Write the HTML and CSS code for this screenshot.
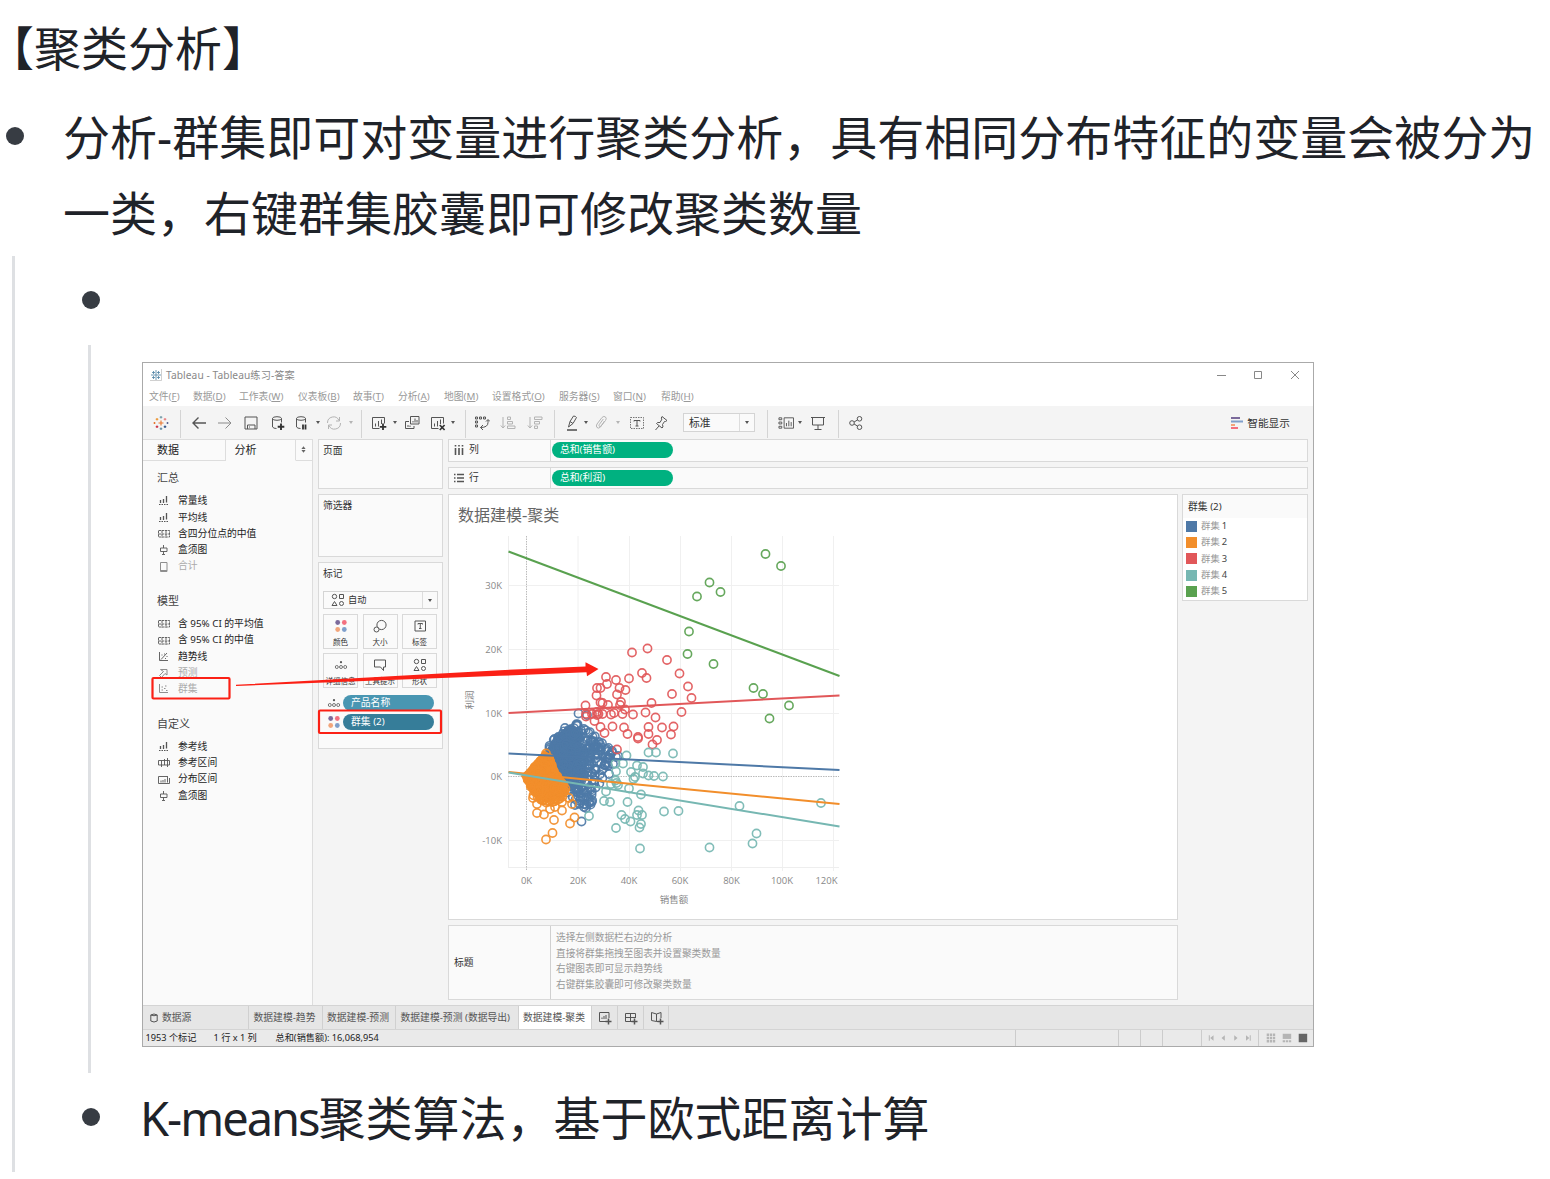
FILE: index.html
```html
<!DOCTYPE html>
<html lang="zh-CN">
<head>
<meta charset="utf-8">
<title>聚类分析</title>
<link rel="stylesheet" href="styles.css">
</head>
<body>
<svg class="defs" width="0" height="0">
  <symbol id="logo" viewBox="0 0 16 16"><g fill="none" stroke-width="1.100"><path stroke="#e8762d" d="M8 5.500v5M5.500 8h5"/><path stroke="#7199a6" d="M8 1v2.600M6.700 2.300h2.600"/><path stroke="#5b879b" d="M8 12.400v2.600M6.700 13.700h2.600"/><path stroke="#eb9129" d="M4 3v2.600M2.700 4.300h2.600"/><path stroke="#c72035" d="M4 10.400v2.600M2.700 11.700h2.600"/><path stroke="#e87a7a" d="M12 3v2.600M10.700 4.300h2.600"/><path stroke="#1f457e" d="M12 10.400v2.600M10.700 11.700h2.600"/><path stroke="#e8762d" d="M1.500 7v2M.5 8h2"/><path stroke="#5b6591" d="M14.500 7v2M13.500 8h2"/></g></symbol>
  <symbol id="app" viewBox="0 0 12 12"><path d="M6 1v10M1 6h10M3.500 2v3M2 3.500h3M8.500 2v3M7 3.500h3M3.500 7v3M2 8.500h3M8.500 7v3M7 8.500h3" stroke="#4f83a5" fill="none" stroke-width=".8"/><path d="M11.500 0v11.500H0" fill="none" stroke="#bbb" stroke-width=".7"/></symbol>
  <symbol id="back" viewBox="0 0 16 16"><path d="M15 8H2M7.500 2.500L2 8l5.500 5.500" stroke-width="1.400"/></symbol>
  <symbol id="fwd" viewBox="0 0 16 16"><path d="M1 8h13M8.500 2.500L14 8l-5.500 5.500"/></symbol>
  <symbol id="save" viewBox="0 0 16 16"><path d="M2 2h12v12H2zM4.500 14v-4h7.500v4M6 12h1"/></symbol>
  <symbol id="dsadd" viewBox="0 0 16 16"><ellipse cx="7" cy="3.500" rx="4.500" ry="1.800"/><path d="M2.500 3.500v8.500q1 1.500 4 1.500M11.500 3.500v4"/><path d="M11 8.500v6.500M7.700 11.700h6.600" stroke-width="1.900" stroke="#333"/></symbol>
  <symbol id="dspause" viewBox="0 0 16 16"><ellipse cx="7" cy="3.500" rx="4.500" ry="1.800"/><path d="M2.500 3.500v8.500q1 1.500 4 1.500M11.500 3.500v4"/><path d="M9 9.500v5M11.500 9.500v5" stroke-width="1.800" stroke="#333"/></symbol>
  <symbol id="refresh" viewBox="0 0 16 16"><path d="M1.500 8a6 6 0 0 1 11.500-2.500M14.500 8a6 6 0 0 1-11.500 2.500M13.500 2v4H10M2.500 14v-4H6"/></symbol>
  <symbol id="sheet" viewBox="0 0 16 16"><path d="M8.500 13.500H1.500v-11h12v6M4.500 8.500v3M7.500 6v5.500M10.500 4.500V9"/><path d="M12 8.500V15M8.800 11.800h6.500" stroke="#333" stroke-width="1.800"/></symbol>
  <symbol id="dup" viewBox="0 0 16 16"><path d="M6.500 1.500h8.500v7.500H6.500zM9 7.500V6M11 7.500V3.500M13 7.500V5M5 6.500H1.500v7h8.500V11M4 12v-2M6 12v-1.500"/></symbol>
  <symbol id="clear" viewBox="0 0 16 16"><path d="M8.500 13.500H1.500v-11h12v6M4.500 8.500v3M7.500 6v5.500M10.500 4.500V9"/><path d="M9.800 10l4.800 5M14.600 10l-4.800 5" stroke="#333" stroke-width="1.700"/></symbol>
  <symbol id="swap" viewBox="0 0 16 16"><path d="M1.500 2h2v2h-2zM5.500 2h2v2h-2zM9.500 2h2v2h-2zM1.500 6h2v2h-2zM1.500 10h2v2h-2zM14 5v2.500q0 5-7.500 5M12 6.500L14 4.500l2 2M9 10l-2.500 2.500L9 15"/></symbol>
  <symbol id="asc" viewBox="0 0 16 16"><path d="M3 2v11M.8 10.500L3 13l2.200-2.500M7.500 2h3v2.500h-3zM7.500 6.500h5V9h-5zM7.500 11H15v2.500H7.500z"/></symbol>
  <symbol id="desc" viewBox="0 0 16 16"><path d="M3 2v11M.8 10.500L3 13l2.200-2.500M7.500 2H15v2.500H7.500zM7.500 6.500h5V9h-5zM7.500 11h3v2.500h-3z"/></symbol>
  <symbol id="pen" viewBox="0 0 16 16"><path d="M4.500 12L6 6.500l3.500-5.500q2 0 3 1.500L9 8.500zM6 6.500l3 2"/><path d="M3 15h10" stroke-width="1.600"/></symbol>
  <symbol id="clip" viewBox="0 0 16 16"><path d="M11.500 6l-4 6q-2 2-3.500.5-1.300-1.300 0-3.500L9 2.500q2-2 3.500-.500t0 3.500L8 11q-1 1-1.700.3-.6-.8 0-1.800l4-5.500"/></symbol>
  <symbol id="label" viewBox="0 0 16 16"><path d="M1.500 2.500h13v11h-13z" stroke-dasharray="1.500 1" stroke-width=".8"/><path d="M5 6.500V5.500h6v1M8 5.500V11M6.500 11h3"/></symbol>
  <symbol id="pin" viewBox="0 0 16 16"><path d="M9 1.500l5 4-1.500 1-1 0L9.500 9.500l.5 2.500-1 1L3.500 8.500l1-1H7l2-3.500-.8-.8zM6 11l-3.500 4"/></symbol>
  <symbol id="cards" viewBox="0 0 17 16"><path d="M1 2.500h3v2H1zM1 7h3v2H1zM1 11.500h3v2H1zM6.500 2.500h10v11h-10zM9 11.500V8M11.500 11.500v-6M14 11.500V7"/></symbol>
  <symbol id="present" viewBox="0 0 16 16"><path d="M1 2.500h14M2.500 2.500v7.500h11V2.500M8 10v4M4.500 14.500h7"/></symbol>
  <symbol id="share" viewBox="0 0 16 16"><circle cx="4" cy="8" r="2.300"/><circle cx="11.500" cy="3.800" r="2.300"/><circle cx="11.500" cy="12.200" r="2.300"/><path d="M6.100 7l3.300-2M6.100 9l3.300 2"/></symbol>
  <symbol id="line" viewBox="0 0 12 10"><path d="M2.500 4v3M5.500 3v4M8.500 0v6.500" stroke-width="1.300"/><path d="M1 8.500h10" stroke-dasharray="1.500 1"/></symbol>
  <symbol id="range" viewBox="0 0 12 10"><path d="M.5 1.500h11v6.500H.500zM.5 5h11M4 1.500v7M8 1.500v7" stroke-dasharray="2.500 .7" stroke-width=".9"/></symbol>
  <symbol id="span" viewBox="0 0 12 10"><path d="M.5 2.500h11v4.500H.500zM3.500 2.500v6.500M6.500 1v6M9.500 0v9" stroke-width=".9"/></symbol>
  <symbol id="dist" viewBox="0 0 12 10"><path d="M9 1.500H.500v7h11V3M3 5.500v2M5 5v2.500M7 4v3.500M9.500 1v6.500" stroke-width=".9"/></symbol>
  <symbol id="box" viewBox="0 0 12 10"><path d="M5.500 0v3M2.500 3h6.500v3.500H2.500zM5.500 6.500V9M4 9.500h3" stroke-width=".9"/></symbol>
  <symbol id="total" viewBox="0 0 12 10"><path d="M2.500 .5h6.500v9H2.500zM2.500 8.500h6.500"/></symbol>
  <symbol id="trend" viewBox="0 0 12 10"><path d="M1.500 0v8.500H10M3 7.500l6-6.500M3.500 3h1M6 2h1M7 6.500h1M8.500 4.500h1" stroke-width=".9"/></symbol>
  <symbol id="fore" viewBox="0 0 12 10"><path d="M2.500 1.500h6.500V7L7 5.500 3.500 9.500 1.500 7.500 5.500 3.500z"/></symbol>
  <symbol id="clust" viewBox="0 0 12 10"><path d="M1.500 0v8.500H10M3.500 3h1.500M3.500 6h1.500M7 2h1.500M6 4.500h1.500M8 6.500H9.500"/></symbol>
  <symbol id="shapes" viewBox="0 0 14 14"><circle cx="3.500" cy="3.500" r="2.200"/><path d="M8.500 1.500h4v4h-4zM3.500 8.500l2.500 4h-5z"/><circle cx="10.500" cy="10.500" r="2"/></symbol>
  <symbol id="colors" viewBox="0 0 14 14"><g stroke="none"><circle cx="3.700" cy="3.500" r="2.400" fill="#7b6a9b"/><circle cx="10.300" cy="3.500" r="2.400" fill="#f3707f"/><circle cx="3.700" cy="10.500" r="2.400" fill="#f2a57b"/><circle cx="10.300" cy="10.500" r="2.400" fill="#7f9fcb"/></g></symbol>
  <symbol id="size" viewBox="0 0 14 14"><circle cx="8.500" cy="6" r="4.600"/><circle cx="3.500" cy="10.500" r="2.500" fill="#fafafa"/></symbol>
  <symbol id="tag" viewBox="0 0 14 14"><path d="M2 2h10.500v10H2zM5 5.500V4.500h4.500v1M7.250 4.500v5M6 9.500h2.500"/></symbol>
  <symbol id="detail" viewBox="0 0 14 14"><circle cx="7" cy="4.200" r="1.100" fill="#555" stroke="none"/><circle cx="2.800" cy="9" r="1.500" stroke-width=".8"/><circle cx="7" cy="9" r="1.500" stroke-width=".8"/><circle cx="11.200" cy="9" r="1.500" stroke-width=".8"/></symbol>
  <symbol id="tip" viewBox="0 0 14 14"><path d="M1.500 2h11v7h-2v3.500L7.500 9h-6z"/></symbol>
  <symbol id="tabsheet" viewBox="0 0 14 14"><path d="M8 10.500H1.500v-9h9.500V7M4 8V6.500M6 8V5M8 8V4"/><path d="M10.500 7.500v6M7.500 10.500h6" stroke-width="1.500"/></symbol>
  <symbol id="tabdash" viewBox="0 0 14 14"><path d="M8 10.500H1.500v-8h10V7M1.500 6.500h10M6.500 2.500v8"/><path d="M10.500 7.500v6M7.500 10.500h6" stroke-width="1.500"/></symbol>
  <symbol id="tabstory" viewBox="0 0 14 14"><path d="M8 10.500H6.500L1.500 9.500v-8L6.500 3v7.500M6.500 3l4.500-1.500V7"/><path d="M10.500 7.500v6M7.500 10.500h6" stroke-width="1.500"/></symbol>
</svg>

<h1 class="title">【聚类分析】</h1>
<ul class="notes">
  <li class="note">分析-群集即可对变量进行聚类分析，具有相同分布特征的变量会被分为一类，右键群集胶囊即可修改聚类数量</li>
</ul>
<div class="branch">
  <div class="note empty"></div>
  <div class="branch inner">
    <section class="window">
      <header class="titlebar"><svg class="app"><use href="#app"/></svg><span>Tableau - Tableau练习-答案</span>
        <svg class="winctl" viewBox="0 0 88 12"><path d="M1 6.500h9M38.500 2.500h7v7h-7zM75 2l8 8M83 2l-8 8"/></svg></header>
      <nav class="menu"><span>文件(<u>F</u>)</span><span>数据(<u>D</u>)</span><span>工作表(<u>W</u>)</span><span>仪表板(<u>B</u>)</span><span>故事(<u>T</u>)</span><span>分析(<u>A</u>)</span><span>地图(<u>M</u>)</span><span>设置格式(<u>O</u>)</span><span>服务器(<u>S</u>)</span><span>窗口(<u>N</u>)</span><span>帮助(<u>H</u>)</span></nav>
      <div class="toolbar">
        <i><svg><use href="#logo"/></svg></i><i class="sep"></i><i><svg><use href="#back"/></svg></i><i class="mid"><svg><use href="#fwd"/></svg></i><i><svg><use href="#save"/></svg></i><i><svg><use href="#dsadd"/></svg></i><i><svg><use href="#dspause"/></svg></i><i class="caret"></i><i class="off"><svg><use href="#refresh"/></svg></i><i class="caret off"></i><i class="sep"></i><i><svg><use href="#sheet"/></svg></i><i class="caret"></i><i><svg><use href="#dup"/></svg></i><i><svg><use href="#clear"/></svg></i><i class="caret"></i><i class="sep"></i><i><svg><use href="#swap"/></svg></i><i class="off"><svg><use href="#asc"/></svg></i><i class="off"><svg><use href="#desc"/></svg></i><i class="sep"></i><i><svg><use href="#pen"/></svg></i><i class="caret"></i><i class="off"><svg><use href="#clip"/></svg></i><i class="caret off"></i><i><svg><use href="#label"/></svg></i><i class="pin"><svg><use href="#pin"/></svg></i><div class="fit"><span>标准</span><i class="caret"></i></div><i class="sep"></i><i><svg><use href="#cards"/></svg></i><i class="caret"></i><i><svg><use href="#present"/></svg></i><i class="sep"></i><i><svg><use href="#share"/></svg></i>
        <div class="smart"><svg viewBox="0 0 12 12"><path d="M0 1h9" stroke="#7b6a9b"/><path d="M0 4.500h12" stroke="#7f9fcb"/><path d="M0 8h4" stroke="#f2a57b"/><path d="M0 11h7" stroke="#f3707f"/></svg>智能显示</div>
      </div>
      <div class="work">
        <aside class="side">
          <div class="sidetabs"><b>数据</b><b class="on">分析</b><b class="sort"><svg viewBox="0 0 6 8"><path d="M3 0l2.500 3.300H.5zM3 8l2.500-3.300H.5z"/></svg></b></div>
          <h2>汇总</h2>
          <ul><li><svg><use href="#line"/></svg>常量线</li><li><svg><use href="#line"/></svg>平均线</li><li><svg><use href="#range"/></svg>含四分位点的中值</li><li><svg><use href="#box"/></svg>盒须图</li><li class="off"><svg><use href="#total"/></svg>合计</li></ul>
          <h2>模型</h2>
          <ul><li><svg><use href="#range"/></svg>含 95% CI 的平均值</li><li><svg><use href="#range"/></svg>含 95% CI 的中值</li><li><svg><use href="#trend"/></svg>趋势线</li><li class="off"><svg><use href="#fore"/></svg>预测</li><li class="off"><svg><use href="#clust"/></svg>群集</li></ul>
          <h2>自定义</h2>
          <ul><li><svg><use href="#line"/></svg>参考线</li><li><svg><use href="#span"/></svg>参考区间</li><li><svg><use href="#dist"/></svg>分布区间</li><li><svg><use href="#box"/></svg>盒须图</li></ul>
        </aside>
        <div class="shelfcol">
          <div class="card pages">页面</div>
          <div class="card filters">筛选器</div>
          <div class="card marks">
            <div class="cardname">标记</div>
            <div class="marktype"><svg><use href="#shapes"/></svg><span>自动</span><i class="caret"></i></div>
            <div class="markgrid">
              <div><svg><use href="#colors"/></svg>颜色</div><div><svg><use href="#size"/></svg>大小</div><div><svg><use href="#tag"/></svg>标签</div>
              <div><svg><use href="#detail"/></svg>详细信息</div><div><svg><use href="#tip"/></svg>工具提示</div><div><svg><use href="#shapes"/></svg>形状</div>
            </div>
            <div class="markrow"><svg><use href="#detail"/></svg><span class="pill">产品名称</span></div>
            <div class="markrow"><svg><use href="#colors"/></svg><span class="pill dark">群集 (2)</span></div>
          </div>
        </div>
        <div class="main">
          <div class="card shelf"><div class="shelfname"><svg viewBox="0 0 10 10"><path d="M1.500 0v1.500M1.500 3v7M5 0v1.500M5 3v7M8.500 0v1.500M8.500 3v7"/></svg>列</div><span class="pill green">总和(销售额)</span></div>
          <div class="card shelf"><div class="shelfname"><svg viewBox="0 0 10 10"><path d="M0 1.500h1.500M3 1.500h7M0 5h1.500M3 5h7M0 8.500h1.500M3 8.500h7"/></svg>行</div><span class="pill green">总和(利润)</span></div>
          <div class="lower">
            <div class="canvas">
              <div class="card view"><h3>数据建模-聚类</h3><svg id="chart" class="chart" viewBox="449 532 729 386"></svg></div>
              <div class="card caption"><div class="capname">标题</div><p>选择左侧数据栏右边的分析<br>直接将群集拖拽至图表并设置聚类数量<br>右键图表即可显示趋势线<br>右键群集胶囊即可修改聚类数量</p></div>
            </div>
            <div class="card legend"><h4>群集 (2)</h4><ul><li class="c1">群集 <b>1</b></li><li class="c2">群集 <b>2</b></li><li class="c3">群集 <b>3</b></li><li class="c4">群集 <b>4</b></li><li class="c5">群集 <b>5</b></li></ul></div>
          </div>
        </div>
      </div>
      <div class="tabs"><span class="src"><svg viewBox="0 0 8 10"><path d="M.8 2q3.200-2 6.400 0v6q-3.200 2-6.400 0zM.8 2q3.200 1.500 6.400 0"/></svg>数据源</span><span>数据建模-趋势</span><span>数据建模-预测</span><span class="wide">数据建模-预测 (数据导出)</span><span class="on">数据建模-聚类</span><span class="add"><svg><use href="#tabsheet"/></svg></span><span class="add"><svg><use href="#tabdash"/></svg></span><span class="add"><svg><use href="#tabstory"/></svg></span></div>
      <footer class="status"><span class="s1">1953 个标记</span><span class="s2">1 行 x 1 列</span><span class="s3">总和(销售额): 16,068,954</span>
        <div class="cells"><i></i><i></i><i></i><i></i><i><svg viewBox="0 0 57 17"><path fill="#b5b5b5" d="M6 5.500h1v6H6zM7.500 8.500l3.500-3v6zM19.500 8.500l3.500-3v6zM36.500 8.500l-3.500-3v6zM49 8.500l-3.500-3v6zM49.500 5.500h1v6h-1z"/></svg></i><i><svg viewBox="0 0 55 17"><path d="M7 5h9M7 8.500h9M7 12h9" stroke="#b5b5b5" stroke-width="2.500" stroke-dasharray="2.500 .8"/><path fill="#b5b5b5" d="M24 4h9v5.500h-9z"/><path d="M24 12h9" stroke="#b5b5b5" stroke-width="2" stroke-dasharray="2.500 .8"/><path fill="#666" d="M41 4h9v9h-9z"/></svg></i></div></footer>
      <svg class="marker" viewBox="142 362 1172 685"><g fill="none" stroke="#fb2015" stroke-width="2.200"><rect x="152.500" y="678" width="77" height="20.500" rx="1"/><rect x="319" y="710.500" width="122" height="22.500" rx="1"/></g><path fill="#fb2015" d="M236 684.800L500 670.200 585.500 666.400V662.300L598.500 669 587 676.300 586.500 672.200 500 675.800 236 686z"/></svg>
    </section>
  </div>
  <div class="note last"><span class="latin">K-means</span>聚类算法，基于欧式距离计算</div>
</div>
<script src="chart.js"></script>
</body>
</html>
```

FILE: styles.css
```css
* { box-sizing: border-box; }
body { margin: 0; width: 1550px; height: 1179px; overflow: hidden; background: #fff; color: #1f2329; font-family: "Noto Sans", "Noto Sans CJK SC", sans-serif; }
ul { list-style: none; margin: 0; padding: 0; }
i, b, u { font-style: normal; font-weight: 400; }
svg { fill: none; stroke: #555; display: block; flex: none; }
.defs { position: absolute; }

.title { margin: 0; text-indent: -13px; padding-top: 8px; font-size: 47px; line-height: 76px; font-weight: 400; font-family: "Noto Sans CJK SC", sans-serif; height: 99px; }
.note { position: relative; font-size: 47px; line-height: 76px; padding-left: 63px; white-space: normal; }
.notes { height: 157px; }
.note::before { content: ""; position: absolute; left: 6px; top: 28px; width: 18px; height: 18px; border-radius: 50%; background: #373c43; }
.branch { margin-left: 12px; border-left: 3px solid #dee0e3; height: 916px; padding-top: 6px; }
.branch .note { margin-left: 61px; padding-left: 64px; }
.branch .note::before { left: 6px; top: 29px; }
.empty { height: 83px; }
.inner { margin-left: 73px; height: 728px; padding: 17px 0 0 51px; }
.last { padding-top: 7px; }
.branch .last::before { top: 35px; }
.latin { letter-spacing: -2px; }

.window { position: relative; width: 1172px; height: 685px; border: 1px solid #aaa; background: #f4f4f4; display: flex; flex-direction: column; font-size: 9.8px; line-height: 16px; color: #333; }
.titlebar { height: 23px; background: #fff; display: flex; align-items: center; padding-left: 7px; color: #888; font-size: 10.2px; gap: 4px; }
.titlebar span { letter-spacing: .08px; }
.app { width: 12px; height: 12px; }
.winctl { width: 88px; height: 12px; margin-left: auto; margin-right: 9px; stroke: #888; }
.menu { height: 20px; background: #fff; color: #999; display: grid; grid-template-columns: 44px 46px 59px 55px 45px 46px 48px 67px 54px 48px 50px; padding-left: 6px; line-height: 22px; white-space: nowrap; }
.toolbar { height: 33px; display: grid; padding-left: 1px; grid-template-columns: 34px 5px 31px 22px 30px 24px 24px 8px 24px 10px 10px 26px 6px 28px 24px 6px 18px 16px 36px 18px 20px 16px 12px 18px 16px 22px 33px 76px 21px 16px 12px 24px 17px 18px 1fr; }
.toolbar > i { display: flex; align-items: center; justify-content: center; }
.toolbar > i svg { width: 16px; height: 16px; }
.toolbar .off { opacity: .4; }
.toolbar .mid { opacity: .65; }
.toolbar .pin { justify-content: flex-start; padding-left: 5px; }
.sep::before { content: ""; width: 1px; height: 28px; background: #d4d4d4; margin-top: 3px; }
.caret::before { content: ""; border: 2.500px solid transparent; border-top: 3px solid #555; border-bottom: 0; }
.fit { align-self: center; margin: 0 2px; height: 19px; border: 1px solid #d4d4d4; background: #fafafa; display: flex; line-height: 17px; font-size: 10.8px; padding-left: 5px; }
.fit .caret, .marktype .caret { margin-left: auto; width: 15px; border-left: 1px solid #ddd; display: flex; align-items: center; justify-content: center; }
.smart { display: flex; align-items: center; justify-content: flex-end; gap: 4px; padding-right: 23px; font-size: 10.7px; }
.smart svg { width: 12px; height: 12px; stroke-width: 2; }

.work { height: 566px; display: flex; }
.side { width: 170px; background: #fafafa; border-right: 1px solid #ddd; color: #222; }
.sidetabs { display: flex; height: 22px; margin-bottom: 1px; }
.sidetabs b { width: 83px; border-right: 1px solid #ddd; border-bottom: 1px solid #ddd; padding-left: 14px; line-height: 20px; font-size: 11px; border-top: 1px solid #ddd; }
.sidetabs b.on { width: 71px; padding-left: 9px; border-bottom-color: transparent; }
.sidetabs b.sort { width: 16px; border-right: 0; padding: 6px 5px; }
.sort svg { width: 5px; height: 7px; fill: #666; stroke: none; }
.side h2 { margin: 0; padding-left: 14px; font-size: 11px; font-weight: 400; line-height: 31.300px; color: #444; }
.side ul { margin-bottom: 10px; }
.side li { height: 16.300px; line-height: 16.300px; display: flex; align-items: center; gap: 8px; padding-left: 15px; white-space: nowrap; }
.side li svg { width: 12px; height: 10px; }
.side .off { color: #aaa; }
.side .off svg { opacity: .65; }

.card { background: #fafafa; border: 1px solid #d9d9d9; }
.shelfcol { width: 125px; margin: 0 5px; display: flex; flex-direction: column; gap: 5px; }
.pages, .filters { padding: 3px 4px; height: 50px; }
.filters { height: 63px; }
.marks { height: 187px; padding: 3px 4px; }
.cardname { height: 25px; }
.marktype { display: flex; height: 18px; border: 1px solid #d4d4d4; align-items: stretch; padding-left: 7px; gap: 3px; line-height: 16px; font-size: 9.200px; }
.marktype svg { width: 14px; height: 14px; margin-top: 1px; }
.markgrid { margin-top: 5px; display: grid; grid-template-columns: repeat(3, 35px); gap: 4px 4.500px; }
.markgrid div { height: 35px; border: 1px solid #d9d9d9; display: flex; flex-direction: column; align-items: center; font-size: 7.500px; line-height: 10px; padding-top: 4px; white-space: nowrap; gap: 4px; }
.markgrid svg, .markrow svg { width: 14px; height: 14px; }
.markrow { display: flex; align-items: center; gap: 2px; padding-left: 4px; height: 16px; margin-top: 7px; }
.markrow + .markrow { margin-top: 3px; }
.pill { width: 91px; height: 16px; border-radius: 8px; background: #4996b2; color: #fff; padding-left: 8px; line-height: 16px; font-size: 9.800px; }
.dark { background: #367d99; }
.green { width: 121px; background: #00b180; margin: 2px 0 0 1px; }

.main { width: 860px; display: flex; flex-direction: column; gap: 5px; }
.shelf { height: 22.500px; display: flex; }
.shelfname { width: 102px; border-right: 1px solid #d9d9d9; display: flex; align-items: center; gap: 5px; padding-left: 5px; }
.shelfname svg { width: 10px; height: 10px; stroke-width: 1.600; }
.lower { display: flex; justify-content: space-between; }
.canvas { width: 730px; display: flex; flex-direction: column; gap: 5px; }
.view { height: 426px; background: #fff; }
.view h3 { margin: 0; height: 37px; padding-left: 9px; line-height: 41px; font-weight: 400; font-size: 16px; color: #666; font-family: "Liberation Serif", "Noto Sans CJK SC", serif; }
.chart { width: 729px; height: 386px; }
.chart text { stroke: none; fill: #888; font-size: 9.500px; font-family: "Open Sans", "Noto Sans CJK SC", sans-serif; }
.caption { height: 75px; display: flex; }
.capname { width: 102px; border-right: 1px solid #d0d0d0; padding-left: 5px; line-height: 73px; }
.caption p { margin: 4px 5px; font-size: 9.700px; line-height: 15.500px; color: #999; }
.legend { width: 126px; height: 107px; background: #fff; }
.legend h4 { margin: 0; height: 23px; padding-left: 5px; line-height: 23px; font-weight: 400; font-size: 9.800px; background: #fafafa; }
.legend li { height: 16.300px; line-height: 16.300px; display: flex; gap: 2px; align-items: center; color: #999; padding-left: 3px; font-size: 9.400px; }
.legend li b { color: #444; }
.legend li::before { content: ""; width: 11px; height: 11px; margin-right: 2px; background: #4e79a7; }
.legend .c2::before { background: #f28e2b; }
.legend .c3::before { background: #e15759; }
.legend .c4::before { background: #76b7b2; }
.legend .c5::before { background: #59a14f; }

.tabs { height: 24px; background: #e6e6e6; border-top: 1px solid #d4d4d4; display: flex; line-height: 24px; color: #555; white-space: nowrap; }
.tabs span { width: 73.500px; padding-left: 4.500px; border-right: 1px solid #d0d0d0; }
.tabs .src { width: 106px; display: flex; align-items: center; gap: 4px; padding-left: 7px; }
.src svg { width: 8px; height: 10px; }
.tabs .wide { width: 122.500px; }
.tabs .on { background: #fff; }
.tabs .add { width: 25.800px; display: flex; align-items: center; padding-left: 6px; }
.add svg { width: 14px; height: 14px; }
.status { height: 17px; background: #eaeaea; border-top: 1px solid #d4d4d4; display: flex; font-size: 9.200px; line-height: 16px; padding-left: 2.500px; color: #222; white-space: nowrap; }
.s1 { width: 68px; } .s2 { width: 62px; }
.cells { margin-left: auto; display: grid; grid-template-columns: 103px 22px 22px 39px 57px 55px; }
.cells i { border-left: 1px solid #ccc; }
.cells svg { stroke: none; height: 16px; width: 100%; }
.marker { position: absolute; left: -1px; top: -1px; width: 1172px; height: 685px; stroke: none; }
```

FILE: chart.js
```js
const chart = document.getElementById('chart');
const NS = 'http://www.w3.org/2000/svg';
const BLUE = '#4e79a7', ORANGE = '#f28e2b', RED = '#e15759', TEAL = '#76b7b2', GREEN = '#59a14f';

function add(tag, attrs, text) {
  const el = document.createElementNS(NS, tag);
  for (const k in attrs) el.setAttribute(k, attrs[k]);
  if (text) el.textContent = text;
  chart.appendChild(el);
}
function line(x1, y1, x2, y2, stroke, width, dash) {
  add('line', { x1, y1, x2, y2, stroke, 'stroke-width': width, 'stroke-dasharray': dash || 'none' });
}
function dots(color, list) {
  for (let i = 0; i < list.length; i += 2)
    add('circle', { cx: list[i], cy: list[i + 1], r: 4.1, stroke: color, 'stroke-width': 1.6, 'stroke-opacity': .92 });
}

// repeatable pseudo-random numbers for the crowded clusters
let seed = 11;
function rnd() { seed = (seed * 16807) % 2147483647; return seed / 2147483647; }
function inside(x, y, p) {
  let hit = false;
  for (let i = 0, j = p.length - 2; i < p.length; j = i, i += 2)
    if ((p[i + 1] > y) !== (p[j + 1] > y) && x < (p[j] - p[i]) * (y - p[i + 1]) / (p[j + 1] - p[i + 1]) + p[i]) hit = !hit;
  return hit;
}
function crowd(color, poly, count) {
  const list = [];
  while (list.length < count * 2) {
    const x = 515 + rnd() * 110, y = 710 + rnd() * 110;
    if (inside(x, y, poly)) list.push(x, y);
  }
  dots(color, list);
}

[578, 629.5, 680.5, 731.5, 782.5, 833.5].forEach(x => line(x, 536, x, 871, '#f0f0f0', 1));
[585.5, 649.5, 713.5, 840.5].forEach(y => line(508, y, 839, y, '#f0f0f0', 1));
line(508.5, 536, 508.5, 867, '#eee', 1);
line(508, 867.5, 839, 867.5, '#eee', 1);
line(526.5, 536, 526.5, 871, '#bbb', 1, '1.5 1');
line(508, 776.5, 839, 776.5, '#bbb', 1, '1.5 1');

[['30K', 589], ['20K', 653], ['10K', 717], ['0K', 780], ['-10K', 844]].forEach(t => add('text', { x: 502, y: t[1], 'text-anchor': 'end' }, t[0]));
[['0K', 526.5], ['20K', 578], ['40K', 629], ['60K', 680], ['80K', 731.5], ['100K', 782], ['120K', 826.5]].forEach(t => add('text', { x: t[1], y: 883.5, 'text-anchor': 'middle' }, t[0]));
add('text', { x: 674, y: 903, 'text-anchor': 'middle' }, '销售额');
add('text', { transform: 'translate(472.500 700) rotate(-90)', 'text-anchor': 'middle' }, '利润');

dots(GREEN, [765.5, 554, 781, 566, 709.5, 582.5, 720.5, 592, 697, 596.5, 689, 631.500, 687.5, 654, 713.5, 664, 753.500, 688, 763, 694, 789, 705.500, 769.500, 718.500]);

add('path', { fill: BLUE, stroke: 'none', d: 'M545 752L554 737 570 724 578 730 581 758 580 778 574 790 562 790Z' });
crowd(BLUE, [549, 746, 555, 738, 566, 728, 579, 723, 592, 731, 604, 738, 613, 752, 607, 773, 595, 790, 592, 806, 577, 804, 563, 789, 555, 775], 270);
crowd(BLUE, [555, 740, 566, 729, 579, 731, 584, 755, 584, 780, 570, 788], 130);
dots(BLUE, [578.5, 713.5, 587, 715, 565, 728, 581.500, 821.500, 589, 803, 584, 807, 586, 808, 575, 805, 618, 756, 612, 751, 613, 764, 609, 774, 607, 763, 616, 757]);
add('path', { fill: ORANGE, stroke: 'none', d: 'M521 776L544 750 553 756 559 772 567 782 567 792 560 798 546 802 531 795Z' });
crowd(ORANGE, [526, 777, 544, 756, 550, 758, 557, 774, 566, 785, 566, 795, 554, 803, 545, 804, 533, 798], 190);
dots(ORANGE, [546, 753.5, 533, 798, 537, 804, 537, 813, 544, 814.5, 550, 809, 555, 807, 562, 810.500, 562, 802, 554, 820, 570, 823.500, 574.500, 817.500, 552.500, 833, 546, 839.500, 569, 798, 572, 804, 547, 801, 550, 797]);

dots(RED, [632, 652.5, 647.500, 648.500, 667, 660, 642, 673, 646.500, 678, 679.500, 673.500, 688, 686.500, 672, 694, 691.500, 698, 606, 677, 616, 680, 607, 684, 629, 678.500, 597, 688, 600.500, 688, 619.500, 688, 625.500, 690, 596.500, 695.500, 617, 694.500, 585.500, 705.500, 600.500, 702.500, 602.500, 703, 608, 705, 621, 702, 620, 705, 651.500, 703, 645.500, 712.500, 681.500, 712, 655.500, 717.500, 586, 714, 586, 716.500, 592, 714, 597, 712, 598.500, 714, 602.500, 714, 611, 714.500, 614, 713, 622.500, 714, 625, 709.500, 633, 714.500, 597, 715, 594.500, 721, 600.500, 727, 604.500, 733, 612.500, 726.500, 624, 727.500, 627.500, 734, 638, 737, 638, 738.500, 648.500, 727, 648.500, 734, 662, 727.500, 673.500, 726.500, 671, 734.500, 657, 740, 652.500, 744.500, 617, 749.500]);
dots(TEAL, [648.500, 752.5, 656, 752.5, 673, 753.5, 626.500, 755.500, 615.500, 763.500, 623, 763.500, 637, 765.500, 643, 767, 616, 771.500, 631, 772, 635, 777, 633.500, 779, 643, 773.500, 648.500, 775.500, 654, 776, 663, 776.500, 611, 784, 616.500, 783, 618, 785, 615.500, 780.500, 606, 791.500, 629, 788.500, 641, 794.500, 604, 801, 610, 802, 627.500, 802, 589, 816, 638.500, 810.500, 637, 815, 642, 815, 621.500, 815, 625, 819, 630.500, 821.500, 641, 824, 639.500, 827.500, 616, 828, 664, 811.500, 678.500, 811, 640, 848.500, 709.500, 847.500, 739.500, 806, 756.500, 833.500, 752.500, 843.500, 821, 803]);

line(508.5, 551.5, 839.5, 676, GREEN, 2);
line(508.5, 713, 839.5, 695.500, RED, 2);
line(508.5, 753.500, 839.5, 770, BLUE, 2);
line(508.5, 772, 839.5, 804, ORANGE, 2);
line(508.5, 772.500, 839.5, 826.500, TEAL, 2);
```
